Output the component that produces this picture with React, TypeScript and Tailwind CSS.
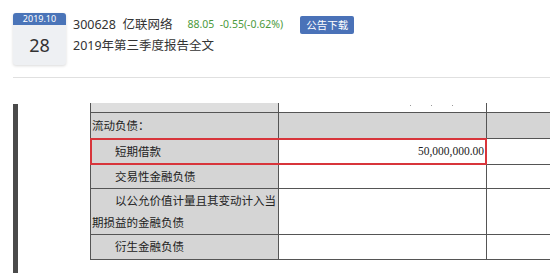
const CJK = "font-['Noto_Sans','Noto_Sans_CJK_SC',sans-serif]";
const SERIF = "font-['Liberation_Serif','Noto_Sans_CJK_SC',serif]";

const ROWS = [
  { label: "流动负债：", indent: false, value: "", h: "h-[26px]", gray: true },
  { label: "短期借款", indent: true, value: "50,000,000.00", h: "h-[26px]", gray: false },
  { label: "交易性金融负债", indent: true, value: "", h: "h-[24px]", gray: false },
  { label: "以公允价值计量且其变动计入当\n期损益的金融负债", indent: true, value: "", h: "h-[46px]", gray: false },
  { label: "衍生金融负债", indent: true, value: "", h: "h-[25px]", gray: false },
];

function DateBadge() {
  return (
    <div className="w-[53px] h-[52px] shrink-0 rounded-[3px] overflow-hidden bg-[#eef0f3] shadow-[0_1px_3px_rgba(0,0,0,0.15)] flex flex-col">
      <div className={`h-[12px] bg-[#4a74b8] text-white text-[9px] leading-[12px] text-center ${CJK}`}>2019.10</div>
      <div className={`flex-1 flex items-center justify-center text-[18px] text-[#333] ${CJK}`}>28</div>
    </div>
  );
}

function Row({ label, indent, value, h, gray }: (typeof ROWS)[number]) {
  const lines = label.split("\n");
  return (
    <div className={`flex border-b border-[#555] ${h}`}>
      <div className={`w-[188px] shrink-0 border-r border-[#555] bg-[#d5d5d5] pl-[1px] flex flex-col justify-center text-[11.5px] leading-[22px] text-[#222] whitespace-nowrap ${SERIF}`}>
        {lines.map((l, i) => (
          <div key={i} className={indent && i === 0 ? "pl-[23px]" : ""}>{l}</div>
        ))}
      </div>
      <div className={`w-[208px] shrink-0 border-r border-[#555] flex items-center justify-end pr-[2px] text-[11.5px] text-[#222] ${SERIF} ${gray ? "bg-[#d5d5d5]" : "bg-white"}`}>
        {value}
      </div>
      <div className={`w-[80px] shrink-0 ${gray ? "bg-[#d5d5d5]" : "bg-white"}`} />
    </div>
  );
}

export default function App() {
  return (
    <div className="w-[550px] h-[273px] overflow-hidden bg-white flex flex-col">
      <div className="flex pt-[13px] pl-[13px]">
        <DateBadge />
        <div className="ml-[7px] flex flex-col">
          <div className="flex items-center h-[20px] mt-[2px]">
            <span className={`text-[12.5px] text-[#333] ${CJK}`}>300628&nbsp;&nbsp;亿联网络</span>
            <span className={`ml-[15px] text-[10.5px] text-[#4c9a3c] ${CJK}`}>88.05&nbsp;&nbsp;-0.55(-0.62%)</span>
            <span className={`ml-[17px] h-[18px] px-[6px] rounded-[2px] bg-[#4a72b8] text-white text-[10.5px] leading-[18px] ${CJK}`}>公告下载</span>
          </div>
          <div className={`mt-[1px] text-[12.5px] text-[#333] leading-[20px] ${CJK}`}>2019年第三季度报告全文</div>
        </div>
      </div>
      <div className="ml-[13px] mt-[12px] border-t border-[#e0e0e0]" />
      <div className="flex flex-1 pt-[25px]">
        <div className="ml-[13px] w-[5px] shrink-0 bg-[#4a4a4a] mt-[1px]" />
        <div className="ml-[72px] shrink-0 relative self-start border-l border-[#555]">
          <div className="flex border-b border-[#555] h-[10px]">
            <div className="w-[188px] shrink-0 border-r border-[#555] bg-[#dedede]" />
            <div className="w-[208px] shrink-0 border-r border-[#555] flex items-start pl-[131px] gap-[20px] pt-[2px]">
              <span className="w-[1px] h-[1px] bg-[#999]" />
              <span className="w-[1px] h-[1px] bg-[#999]" />
              <span className="w-[1px] h-[1px] bg-[#999]" />
            </div>
            <div className="w-[80px] shrink-0" />
          </div>
          {ROWS.map((r) => (
            <Row key={r.label} {...r} />
          ))}
          <div className="absolute left-[-1px] top-[35px] w-[397px] h-[27px] border-2 border-[#d8353b]" />
        </div>
      </div>
    </div>
  );
}
